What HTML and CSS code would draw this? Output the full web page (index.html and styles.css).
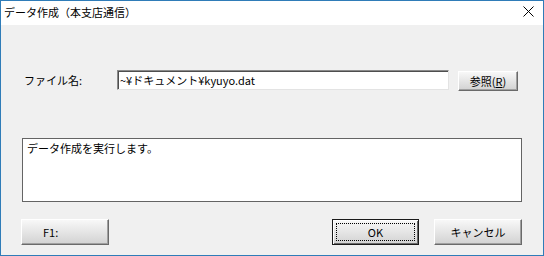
FILE: index.html
```html
<!DOCTYPE html>
<html>
<head>
    <meta charset="utf-8">
    <title>データ作成（本支店通信）</title>
    <link rel="stylesheet" href="styles.css">
</head>
<body>
    <div class="window">
        <div class="titlebar">
            <span class="title">データ作成（本支店通信）</span>
            <span class="close">
                <svg width="11" height="11" viewBox="0 0 11 11">
                    <path d="M0.5 0.5 L10.5 10.5 M10.5 0.5 L0.5 10.5" stroke="#000" stroke-width="1" fill="none"/>
                </svg>
            </span>
        </div>

        <div class="content">
            <div class="file-row">
                <label class="file-label">ファイル名:</label>
                <input class="file-input" type="text" value="~¥ドキュメント¥kyuyo.dat">
                <button class="btn browse-btn">参照(<u>R</u>)</button>
            </div>

            <textarea class="message" readonly>データ作成を実行します。</textarea>

            <div class="button-row">
                <button class="btn wide-btn f1-btn">F1:</button>
                <div class="spacer"></div>
                <button class="btn wide-btn default-btn"><span class="focus">OK</span></button>
                <button class="btn wide-btn">キャンセル</button>
            </div>
        </div>
    </div>
</body>
</html>
```

FILE: styles.css
```css
body {
    margin: 0;
    font-family: "Noto Sans CJK JP", "Noto Sans", sans-serif;
    font-size: 11px;
    color: #000;
}
.window {
    width: 544px;
    height: 256px;
    box-sizing: border-box;
    border: 1px solid #2f7cb8;
    background: #f0f0f0;
    display: flex;
    flex-direction: column;
}
.titlebar {
    height: 24px;
    background: #fff;
    display: flex;
    align-items: center;
    justify-content: space-between;
    padding: 0 9px 0 3px;
}
.title {
    font-size: 11px;
    line-height: 14px;
    margin-top: -3px;
}
.close {
    display: flex;
    margin-top: -4px;
}
.content {
    flex: 1;
    display: flex;
    flex-direction: column;
    padding: 0 21px 0 20px;
}
.file-row {
    display: flex;
    align-items: flex-start;
    margin-top: 45px;
}
.file-label {
    width: 93px;
    padding-left: 3px;
    line-height: 20px;
}
.file-input {
    width: 332px;
    height: 20px;
    box-sizing: border-box;
    margin: 0;
    padding: 0 2px 0 2px;
    font-family: inherit;
    font-size: 11px;
    line-height: 16px;
    background: #fff;
    border: 1px solid;
    border-color: #8a8a8a #e3e3e3 #e3e3e3 #8a8a8a;
    box-shadow: inset 1px 1px #4e4e4e;
    outline: none;
}
.btn {
    box-sizing: border-box;
    margin: 0;
    padding: 0;
    font-family: inherit;
    font-size: 11px;
    font-weight: 400;
    color: #000;
    background: linear-gradient(#f8f8f8, #d2d2d2);
    border: 1px solid;
    border-color: #fff #6a6a6a #6a6a6a #fff;
    box-shadow: inset -1px -1px #a0a0a0;
}
.browse-btn {
    width: 60px;
    height: 20px;
    margin-left: 9px;
    margin-top: 1px;
    line-height: 16px;
}
.browse-btn u {
    text-underline-offset: 1px;
}
.message {
    width: 500px;
    height: 64px;
    box-sizing: border-box;
    margin: 47px 0 0 1px;
    padding: 2px 4px;
    font-family: inherit;
    font-size: 11px;
    line-height: 14px;
    background: #fff;
    border: 1px solid #646464;
    resize: none;
    outline: none;
    overflow: hidden;
}
.button-row {
    display: flex;
    margin-top: 17px;
}
.wide-btn {
    width: 88px;
    height: 26px;
}
.f1-btn {
    text-align: left;
    padding-left: 21px;
}
.spacer {
    flex: 1;
}
.default-btn {
    width: 87px;
    margin-right: 15px;
    border-color: #1a1a1a;
    box-shadow: inset 1px 1px #fff, inset -1px -1px #6a6a6a;
    display: flex;
    padding: 3px;
}
.focus {
    flex: 1;
    display: flex;
    align-items: center;
    justify-content: center;
    border: 1px dotted #000;
}
```
